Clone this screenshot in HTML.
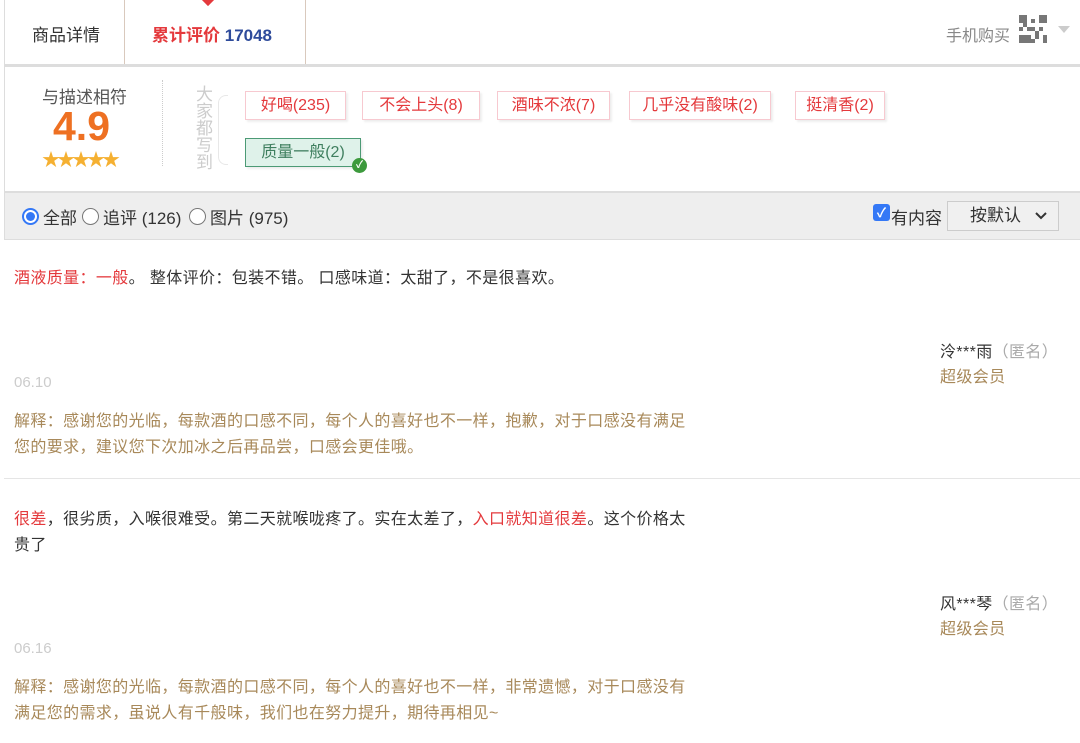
<!DOCTYPE html>
<html><head><meta charset="utf-8"><style>
*{margin:0;padding:0;box-sizing:border-box}
body{width:1080px;height:743px;overflow:hidden;background:#fff;font-family:"Liberation Sans","Noto Sans CJK SC",sans-serif;color:#333;position:relative;font-size:16px}
.a{position:absolute;white-space:nowrap}
.t{letter-spacing:0.38px;font-size:16px}
.tag{position:absolute;height:29px;border:1px solid #f7c9d0;color:#e4393c;font-size:16px;line-height:27px;text-align:center;box-shadow:2px 2px 2px #eee}
.red{color:#e4393c}
.rep{color:#a8895a}
.gray{color:#aaa}
</style></head><body>
<div class="a" style="left:4px;top:0;width:1px;height:66px;background:#ddd"></div>
<div class="a" style="left:124px;top:0;width:1px;height:66px;background:#d9c9bd"></div>
<div class="a" style="left:305px;top:0;width:1px;height:66px;background:#d9c9bd"></div>
<div class="a" style="left:32px;top:21px;font-size:17px;color:#333">商品详情</div>
<div class="a" style="left:152px;top:21px;font-size:17px;font-weight:bold"><span class="red">累计评价</span> <span style="color:#2e4b9b">17048</span></div>
<div class="a" style="left:203px;top:-6px;width:10px;height:10px;background:#e4393c;transform:rotate(45deg)"></div>
<div class="a" style="left:946px;top:22px;font-size:16px;color:#888">手机购买</div>
<svg class="a" style="left:1019px;top:15px" width="28" height="28" viewBox="0 0 7 7"><g fill="#777"><rect x="0" y="0" width="2" height="2"/><rect x="5" y="0" width="2" height="2"/><rect x="0" y="5" width="2" height="2"/><rect x="3" y="1" width="1" height="1"/><rect x="2" y="3" width="2" height="1"/><rect x="4" y="4" width="1" height="2"/><rect x="5" y="3" width="1" height="1"/><rect x="2" y="5" width="1" height="2"/><rect x="6" y="5" width="1" height="2"/><rect x="0" y="3" width="1" height="1"/><rect x="3" y="6" width="1" height="1"/><rect x="1" y="2" width="1" height="1"/></g></svg>
<div class="a" style="left:1058px;top:26px;width:0;height:0;border-left:6px solid transparent;border-right:6px solid transparent;border-top:7px solid #ccc"></div>
<div class="a" style="left:4px;top:64px;width:1076px;height:176px;border:2px solid #ddd;border-right:none;border-top-width:3px;border-left-width:1px"></div>
<div class="a" style="left:42px;top:83px;font-size:17px;color:#555">与描述相符</div>
<div class="a" style="left:53px;top:104px;font-size:41px;font-weight:bold;color:#ee7022;line-height:44px">4.9</div>
<div class="a" style="left:42px;top:146px;font-size:18px;color:#f5b031;letter-spacing:-3px">★★★★★</div>
<div class="a" style="left:162px;top:80px;height:86px;border-left:1px dotted #ccc"></div>
<div class="a" style="left:196px;top:86px;width:18px;font-size:17px;line-height:17px;color:#ccc;white-space:normal">大家都写到</div>
<div class="a" style="left:218px;top:95px;width:10px;height:70px;border:1px solid #e8e8e8;border-right:none;border-radius:8px 0 0 8px"></div>
<div class="tag" style="left:245px;top:91px;width:101px">好喝(235)</div>
<div class="tag" style="left:362px;top:91px;width:118px">不会上头(8)</div>
<div class="tag" style="left:497px;top:91px;width:113px">酒味不浓(7)</div>
<div class="tag" style="left:629px;top:91px;width:142px">几乎没有酸味(2)</div>
<div class="tag" style="left:795px;top:91px;width:90px">挺清香(2)</div>
<div class="tag" style="left:245px;top:138px;width:116px;background:#dff2ea;border-color:#4c9a75;color:#3f7f5f">质量一般(2)</div>
<div class="a" style="left:352px;top:158px;width:15px;height:15px;border-radius:50%;background:#3d9a3d;color:#fff;font-size:10px;line-height:15px;text-align:center;font-weight:bold">✓</div>
<div class="a" style="left:5px;top:191px;width:1075px;height:48px;background:#eee;border-top:2px solid #ddd"></div>
<div class="a" style="left:22px;top:208px;width:17px;height:17px;border-radius:50%;border:2px solid #3478f6;background:#fff"><div style="margin:2px;width:9px;height:9px;border-radius:50%;background:#3478f6"></div></div>
<div class="a" style="left:43px;top:204px;font-size:17px">全部</div>
<div class="a" style="left:82px;top:208px;width:17px;height:17px;border-radius:50%;border:1px solid #777;background:#fff"></div>
<div class="a" style="left:103px;top:204px;font-size:17px">追评 (126)</div>
<div class="a" style="left:189px;top:208px;width:17px;height:17px;border-radius:50%;border:1px solid #777;background:#fff"></div>
<div class="a" style="left:210px;top:204px;font-size:17px">图片 (975)</div>
<div class="a" style="left:873px;top:204px;width:17px;height:17px;border-radius:3px;background:#3478f6;color:#fff;font-size:13px;line-height:17px;text-align:center;font-weight:bold">✓</div>
<div class="a" style="left:891px;top:204px;font-size:17px">有内容</div>
<div class="a" style="left:947px;top:201px;width:112px;height:30px;border:1px solid #ccc;background:#f0f0f0;font-size:17px;line-height:28px;padding-left:22px">按默认</div>
<svg class="a" style="left:1035px;top:212px" width="12" height="8"><path d="M1 1 L6 6 L11 1" stroke="#333" stroke-width="2" fill="none"/></svg>
<div class="a t" style="left:14px;top:264px"><span class="red">酒液质量：一般</span>。 整体评价：包装不错。 口感味道：太甜了，不是很喜欢。</div>
<div class="a t" style="left:940px;top:338px">泠***雨<span class="gray">（匿名）</span></div>
<div class="a rep t" style="left:940px;top:363px">超级会员</div>
<div class="a" style="left:14px;top:374px;color:#ccc;font-size:15px">06.10</div>
<div class="a rep t" style="left:14px;top:407px">解释：感谢您的光临，每款酒的口感不同，每个人的喜好也不一样，抱歉，对于口感没有满足</div>
<div class="a rep t" style="left:14px;top:433px">您的要求，建议您下次加冰之后再品尝，口感会更佳哦。</div>
<div class="a" style="left:4px;top:478px;width:1076px;height:1px;background:#e5e5e5"></div>
<div class="a t" style="left:14px;top:505px"><span class="red">很差</span>，很劣质，入喉很难受。第二天就喉咙疼了。实在太差了，<span class="red">入口就知道很差</span>。这个价格太</div>
<div class="a t" style="left:14px;top:531px">贵了</div>
<div class="a t" style="left:940px;top:590px">风***琴<span class="gray">（匿名）</span></div>
<div class="a rep t" style="left:940px;top:615px">超级会员</div>
<div class="a" style="left:14px;top:640px;color:#ccc;font-size:15px">06.16</div>
<div class="a rep t" style="left:14px;top:673px">解释：感谢您的光临，每款酒的口感不同，每个人的喜好也不一样，非常遗憾，对于口感没有</div>
<div class="a rep t" style="left:14px;top:699px">满足您的需求，虽说人有千般味，我们也在努力提升，期待再相见~</div>
</body></html>
